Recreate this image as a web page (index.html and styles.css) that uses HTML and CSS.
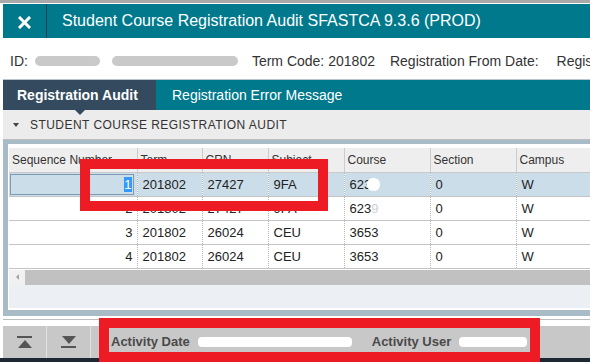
FILE: index.html
```html
<!DOCTYPE html>
<html>
<head>
<meta charset="utf-8">
<link rel="stylesheet" href="styles.css">
</head>
<body>
<div class="page">
  <header class="titlebar">
    <div class="close">
      <svg width="13" height="13" viewBox="0 0 13 13"><path d="M2 2 L11 11 M11 2 L2 11" stroke="#fff" stroke-width="3" stroke-linecap="square"/></svg>
    </div>
    <div class="title">Student Course Registration Audit SFASTCA 9.3.6 (PROD)</div>
  </header>

  <div class="info">
    <span class="lbl">ID:</span>
    <span class="blur blur-id"></span>
    <span class="blur blur-name"></span>
    <span class="lbl term">Term Code:</span>
    <span class="val">201802</span>
    <span class="lbl from">Registration From Date:</span>
    <span class="lbl regis">Registration To Date:</span>
  </div>

  <nav class="tabs">
    <div class="tab active">Registration Audit</div>
    <div class="tab">Registration Error Message</div>
  </nav>

  <section class="section">
    <div class="sechead"><span class="caret"></span>STUDENT COURSE REGISTRATION AUDIT</div>
    <div class="panel">
      <table class="grid">
        <colgroup>
          <col class="c1"><col class="c2"><col class="c3"><col class="c4"><col class="c5"><col class="c6"><col class="c7">
        </colgroup>
        <thead>
          <tr><th>Sequence Number</th><th>Term</th><th>CRN</th><th>Subject</th><th>Course</th><th>Section</th><th>Campus</th></tr>
        </thead>
        <tbody>
          <tr class="sel">
            <td class="num"><div class="focus"><span class="hl">1</span></div></td>
            <td>201802</td><td>27427</td><td>9FA</td><td>623<span class="smudge"></span></td><td>0</td><td>W</td>
          </tr>
          <tr>
            <td class="num">2</td><td>201802</td><td>27427</td><td>9FA</td><td>623<span class="faint">9</span></td><td>0</td><td>W</td>
          </tr>
          <tr>
            <td class="num">3</td><td>201802</td><td>26024</td><td>CEU</td><td>3653</td><td>0</td><td>W</td>
          </tr>
          <tr>
            <td class="num">4</td><td>201802</td><td>26024</td><td>CEU</td><td>3653</td><td>0</td><td>W</td>
          </tr>
        </tbody>
      </table>
      <div class="hscroll">
        <div class="sbtn"><span class="larrow"></span></div>
        <div class="thumb"></div>
      </div>
      <div class="panel-foot"></div>
    </div>
  </section>

  <div class="gap"></div>

  <footer class="bottombar">
    <div class="navbtn"><span class="ico-top"><span class="bar"></span><span class="tri-up"></span></span></div>
    <div class="navbtn"><span class="ico-bot"><span class="tri-down"></span><span class="bar"></span></span></div>
    <div class="activity">
      <span class="alabel">Activity Date</span>
      <span class="wblob wdate"></span>
      <span class="alabel auser">Activity User</span>
      <span class="wblob wuser"></span>
    </div>
  </footer>
  <div class="strip"></div>

  <div class="mark mark-row"></div>
  <div class="mark mark-act"></div>
</div>
</body>
</html>
```

FILE: styles.css
```css
* { box-sizing: border-box; }
html, body { margin: 0; padding: 0; }
body {
  width: 590px;
  height: 362px;
  overflow: hidden;
  background: #fff;
  font-family: "Liberation Sans", Arial, sans-serif;
  color: #333;
}
.page {
  position: relative;
  width: 590px;
  height: 362px;
  border-top: 3px solid #a9a9a9;
  padding: 1px 0 0 3px;
  overflow: hidden;
}

/* Title bar */
.titlebar {
  display: flex;
  align-items: center;
  height: 34px;
  background: #00798c;
  color: #fff;
}
.close {
  width: 44px;
  height: 34px;
  border-right: 1px solid #27414c;
  display: flex;
  align-items: center;
  justify-content: center;
  padding-top: 3px;
}
.title {
  padding-left: 15px;
  font-size: 16px;
  white-space: nowrap;
}

/* Info row */
.info {
  height: 42px;
  display: flex;
  align-items: center;
  padding: 5px 0 0 7px;
  border-bottom: 1px solid #b9c6cf;
  font-size: 14px;
  color: #333;
  white-space: nowrap;
  overflow: hidden;
}
.info > span { flex-shrink: 0; }
.blur {
  display: inline-block;
  height: 10px;
  border-radius: 5px;
  background: #c9c9c9;
}
.blur-id { width: 65px; margin-left: 7px; }
.blur-name { width: 126px; margin-left: 12px; }
.term { margin-left: 14px; }
.val { margin-left: 4px; }
.from { margin-left: 15px; }
.regis { margin-left: 18px; }

/* Tabs */
.tabs {
  display: flex;
  height: 30px;
  background: #00798c;
}
.tab {
  position: relative;
  display: flex;
  align-items: center;
  padding: 0 16px;
  color: #fff;
  font-size: 14px;
  white-space: nowrap;
}
.tab.active {
  width: 153px;
  padding-left: 14px;
  background: #344a5e;
  font-weight: bold;
}
.tab.active::after {
  content: "";
  position: absolute;
  left: 72px;
  bottom: -5px;
  border-left: 5px solid transparent;
  border-right: 5px solid transparent;
  border-top: 5px solid #344a5e;
}

/* Section */
.sechead {
  height: 30px;
  display: flex;
  align-items: center;
  padding-left: 10px;
  background: #ececec;
  border-bottom: 1px solid #bdbdbd;
  font-size: 12px;
  letter-spacing: 0.45px;
  color: #333;
}
.caret {
  width: 0;
  height: 0;
  border-left: 3px solid transparent;
  border-right: 3px solid transparent;
  border-top: 4px solid #444;
  margin-right: 11px;
  margin-top: 1px;
}
.panel {
  border-top: 4px solid #a9bbc7;
  border-left: 5px solid #a9bbc7;
  border-bottom: 6px solid #a9bbc7;
  padding: 4px 0 0 1px;
  background: #fff;
}

.grid {
  border-collapse: collapse;
  table-layout: fixed;
  width: 581px;
  font-size: 13px;
}
.c1 { width: 128px; }
.c2 { width: 65px; }
.c3 { width: 66px; }
.c4 { width: 76px; }
.c5 { width: 86px; }
.c6 { width: 86px; }
.c7 { width: 74px; }

.grid th {
  height: 24px;
  background: #eeeeee;
  border-right: 1px solid #cccccc;
  border-bottom: 1px solid #c9c9c9;
  font-weight: normal;
  font-size: 12px;
  text-align: left;
  padding: 0 3px;
  color: #333;
  white-space: nowrap;
  overflow: hidden;
}
.grid td {
  height: 24px;
  padding: 0 4px 0 5px;
  border-right: 1px dotted #b8b8b8;
  border-bottom: 1px solid #c4c4c4;
  color: #222;
  white-space: nowrap;
  overflow: hidden;
}
.grid td.num { text-align: right; padding-right: 4px; }
.grid tr.sel td { background: #cbdde9; }
.grid tr.sel td.num { padding: 1px 3px 1px 1px; }
.focus {
  height: 21px;
  border: 1px solid #7d9ab3;
  display: flex;
  align-items: center;
  justify-content: flex-end;
  padding-right: 1px;
}
.hl { background: #3399ff; color: #fff; }
.smudge {
  display: inline-block;
  width: 13px;
  height: 13px;
  margin-left: -4px;
  border-radius: 6px;
  background: #fff;
  vertical-align: -2px;
}
.faint { color: #d0d0d0; }

.hscroll {
  display: flex;
  height: 16px;
  border-top: 1px solid #fff;
}
.sbtn {
  width: 16px;
  background: #f1f1f1;
  display: flex;
  align-items: center;
  justify-content: center;
}
.larrow {
  border-top: 3px solid transparent;
  border-bottom: 3px solid transparent;
  border-right: 3px solid #a3a3a3;
}
.thumb { flex: 1; background: #c1c1c1; }
.panel-foot {
  height: 25px;
  background: #eceff3;
  border-bottom: 2px solid #fff;
}

.gap {
  height: 10px;
  border-bottom: 1px solid #fff;
  position: relative;
}
.gap::before {
  content: "";
  position: absolute;
  left: 0; right: 0; top: 3px;
  height: 1px;
  background: #bdbdbd;
}

/* Bottom bar */
.bottombar {
  display: flex;
  height: 32px;
  background: #c8c8c8;
}
.navbtn {
  width: 44px;
  border-right: 1px solid #e2e2e2;
  display: flex;
  align-items: center;
  justify-content: center;
}
.ico-top, .ico-bot {
  display: flex;
  flex-direction: column;
  align-items: center;
  gap: 2px;
}
.bar { width: 15px; height: 2px; background: #555; }
.tri-up {
  border-left: 7.5px solid transparent;
  border-right: 7.5px solid transparent;
  border-bottom: 8px solid #555;
}
.tri-down {
  border-left: 7.5px solid transparent;
  border-right: 7.5px solid transparent;
  border-top: 8px solid #555;
}
.activity {
  display: flex;
  align-items: center;
  padding-left: 20px;
  font-size: 13px;
  font-weight: bold;
  color: #4a4a4a;
  white-space: nowrap;
}
.wblob {
  display: inline-block;
  height: 10px;
  background: #fff;
  border-radius: 4px;
}
.wdate { width: 154px; margin-left: 8px; }
.auser { margin-left: 20px; }
.wuser { width: 68px; margin-left: 8px; }
.strip { height: 10px; background: #1d2834; margin-left: -3px; }

/* Annotation marks */
.mark {
  position: absolute;
  border: 10px solid #ed1c24;
}
.mark-row { left: 80px; top: 156px; width: 248px; height: 52px; }
.mark-act { left: 99px; top: 315px; width: 441px; height: 44px; }
```
